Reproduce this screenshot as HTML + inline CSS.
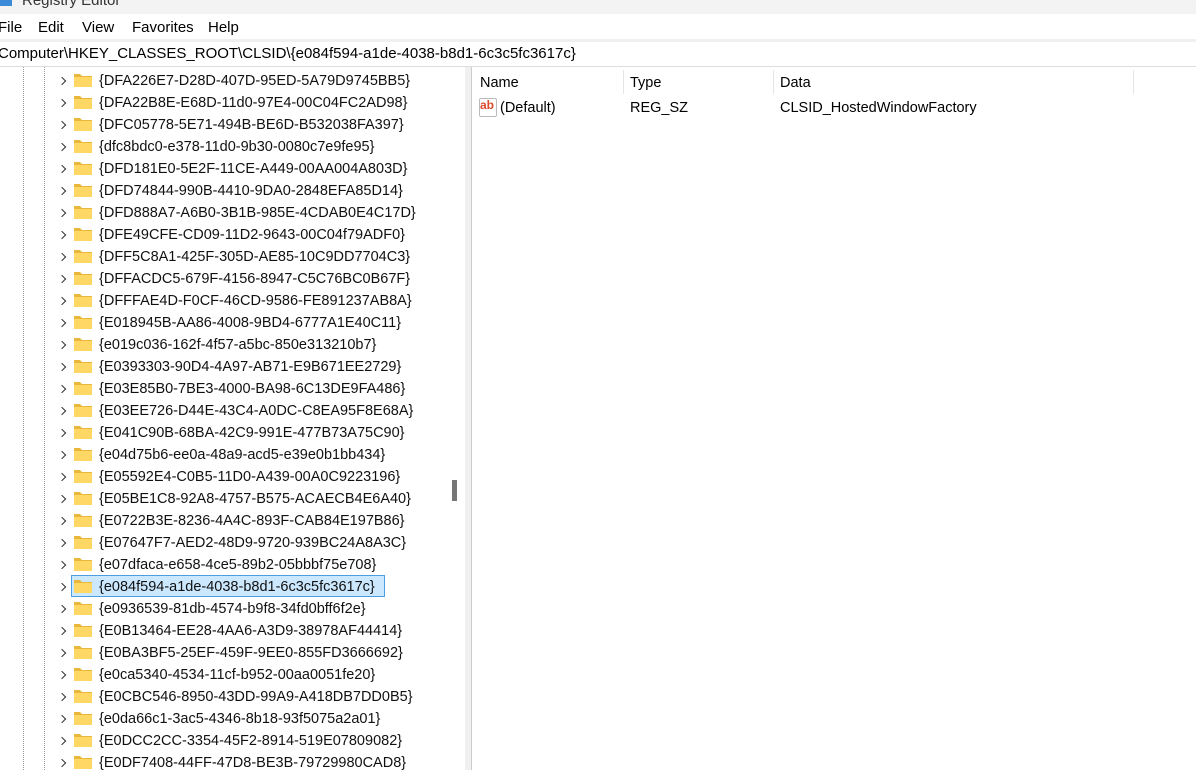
<!DOCTYPE html><html><head><style>
body{margin:0;width:1196px;height:770px;overflow:hidden;background:#fff;font-family:"Liberation Sans",sans-serif;font-size:14px;color:#000;position:relative}
.a{position:absolute;white-space:nowrap}
.row{position:absolute;left:0;height:22px;line-height:22px}
.chev{position:absolute;left:59px;top:8px;width:5px;height:5px;border-right:1.6px solid #333;border-top:1.6px solid #333;transform:rotate(45deg)}
.fold{position:absolute;left:74px;top:3px;width:18px;height:14px}
.t{position:absolute;left:99px;top:0;font-size:14.5px;color:#111}
</style></head><body>
<div class="a" style="left:0;top:0;width:1196px;height:14px;background:#f3f3f3"></div>
<div class="a" style="left:0;top:-8px;font-size:15px;color:#333;left:22px">Registry Editor</div>
<div class="a" style="left:0;top:0;width:12px;height:6px;background:#3a8ad8"></div>
<div class="a" style="top:19px;left:-2px;font-size:15px">File</div>
<div class="a" style="top:19px;left:38px;font-size:15px">Edit</div>
<div class="a" style="top:19px;left:82px;font-size:15px">View</div>
<div class="a" style="top:19px;left:132px;font-size:15px">Favorites</div>
<div class="a" style="top:19px;left:208px;font-size:15px">Help</div>
<div class="a" style="left:0;top:39px;width:1196px;height:3px;background:#f0f0f0"></div>
<div class="a" style="top:45px;left:-2px;font-size:15px">Computer\HKEY_CLASSES_ROOT\CLSID\{e084f594-a1de-4038-b8d1-6c3c5fc3617c}</div>
<div class="a" style="left:0;top:66px;width:1196px;height:1px;background:#ddd"></div>
<div class="a" style="left:23px;top:67px;height:703px;border-left:1px dotted #999"></div>
<div class="a" style="left:44px;top:67px;height:703px;border-left:1px dotted #999"></div>
<div class="a" style="left:465px;top:67px;width:6px;height:703px;background:#f0f0f0"></div>
<div class="a" style="left:471px;top:67px;width:1px;height:703px;background:#ccc"></div>
<div class="a" style="left:452px;top:480px;width:5px;height:21px;background:#777"></div>
<div class="a" style="left:71px;top:575px;width:312px;height:20px;background:#cce8ff;border:1px solid #4a9fe0"></div>
<div id="tree"></div>
<div class="a" style="left:480px;top:75px;font-size:14.5px">Name</div>
<div class="a" style="left:630px;top:75px;font-size:14.5px">Type</div>
<div class="a" style="left:780px;top:75px;font-size:14.5px">Data</div>
<div class="a" style="left:623px;top:70px;width:1px;height:24px;background:#e5e5e5"></div>
<div class="a" style="left:773px;top:70px;width:1px;height:24px;background:#e5e5e5"></div>
<div class="a" style="left:1133px;top:70px;width:1px;height:24px;background:#e5e5e5"></div>
<div class="a" style="left:479px;top:98px;width:16px;height:17px;border:1px solid #bbb;border-radius:2px;background:#fff"></div>
<div class="a" style="left:480px;top:98px;font-size:12px;font-weight:bold;color:#d84a2a">ab</div>
<div class="a" style="left:500px;top:100px;font-size:14.5px">(Default)</div>
<div class="a" style="left:630px;top:100px;font-size:14.5px">REG_SZ</div>
<div class="a" style="left:780px;top:100px;font-size:14.5px">CLSID_HostedWindowFactory</div>
<script>
var k=["{DFA226E7-D28D-407D-95ED-5A79D9745BB5}","{DFA22B8E-E68D-11d0-97E4-00C04FC2AD98}","{DFC05778-5E71-494B-BE6D-B532038FA397}","{dfc8bdc0-e378-11d0-9b30-0080c7e9fe95}","{DFD181E0-5E2F-11CE-A449-00AA004A803D}","{DFD74844-990B-4410-9DA0-2848EFA85D14}","{DFD888A7-A6B0-3B1B-985E-4CDAB0E4C17D}","{DFE49CFE-CD09-11D2-9643-00C04f79ADF0}","{DFF5C8A1-425F-305D-AE85-10C9DD7704C3}","{DFFACDC5-679F-4156-8947-C5C76BC0B67F}","{DFFFAE4D-F0CF-46CD-9586-FE891237AB8A}","{E018945B-AA86-4008-9BD4-6777A1E40C11}","{e019c036-162f-4f57-a5bc-850e313210b7}","{E0393303-90D4-4A97-AB71-E9B671EE2729}","{E03E85B0-7BE3-4000-BA98-6C13DE9FA486}","{E03EE726-D44E-43C4-A0DC-C8EA95F8E68A}","{E041C90B-68BA-42C9-991E-477B73A75C90}","{e04d75b6-ee0a-48a9-acd5-e39e0b1bb434}","{E05592E4-C0B5-11D0-A439-00A0C9223196}","{E05BE1C8-92A8-4757-B575-ACAECB4E6A40}","{E0722B3E-8236-4A4C-893F-CAB84E197B86}","{E07647F7-AED2-48D9-9720-939BC24A8A3C}","{e07dfaca-e658-4ce5-89b2-05bbbf75e708}","{e084f594-a1de-4038-b8d1-6c3c5fc3617c}","{e0936539-81db-4574-b9f8-34fd0bff6f2e}","{E0B13464-EE28-4AA6-A3D9-38978AF44414}","{E0BA3BF5-25EF-459F-9EE0-855FD3666692}","{e0ca5340-4534-11cf-b952-00aa0051fe20}","{E0CBC546-8950-43DD-99A9-A418DB7DD0B5}","{e0da66c1-3ac5-4346-8b18-93f5075a2a01}","{E0DCC2CC-3354-45F2-8914-519E07809082}","{E0DF7408-44FF-47D8-BE3B-79729980CAD8}"];
var h="";k.forEach(function(s,i){h+='<div class="row" style="top:'+(70+i*22)+'px;width:440px"><div class="chev"></div><svg class="fold" viewBox="0 0 18 14"><path d="M0 1h6l2 2h10v11H0z" fill="#e8b73c"/><rect x="0" y="4" width="18" height="10" fill="#ffd765"/></svg><span class="t">'+s+'</span></div>'});
document.getElementById("tree").innerHTML=h;
</script>
</body></html>
